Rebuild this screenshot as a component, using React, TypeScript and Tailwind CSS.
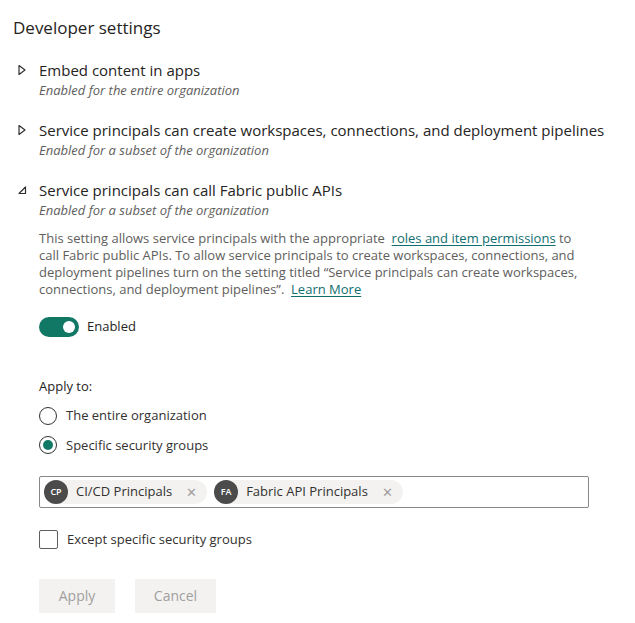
import React from 'react';

const font = { fontFamily: '"Open Sans", "Noto Sans", sans-serif' };

const CollapsedIcon = () => (
  <svg width="10" height="12" viewBox="0 0 10 12" className="shrink-0">
    <path d="M2 1.5 L8 6 L2 10.5 Z" fill="none" stroke="#323130" strokeWidth="1.2" strokeLinejoin="round" />
  </svg>
);

const ExpandedIcon = () => (
  <svg width="10" height="12" viewBox="0 0 10 12" className="shrink-0">
    <path d="M8.5 3 L8.5 9.5 L2 9.5 Z" fill="none" stroke="#323130" strokeWidth="1.2" strokeLinejoin="round" />
  </svg>
);

const SettingHeader = ({ title, sub, open }: any) => (
  <div className="flex">
    <div className="w-[39px] shrink-0 pl-[17px] pt-[4px]">{open ? <ExpandedIcon /> : <CollapsedIcon />}</div>
    <div>
      <div className="text-[15px] leading-[20px] text-[#252423]">{title}</div>
      <div className="text-[13px] leading-[20px] italic text-[#605e5c]">{sub}</div>
    </div>
  </div>
);

const Chip = ({ initials, label }: any) => (
  <div className="flex items-center h-[24px] rounded-full bg-[#f3f2f1] pr-[10px]">
    <div className="w-[24px] h-[24px] rounded-full bg-[#4b4b4b] text-white text-[9px] font-semibold flex items-center justify-center">
      {initials}
    </div>
    <span className="ml-[8px] text-[13px] text-[#323130]">{label}</span>
    <span className="ml-[14px] text-[#a19f9d] text-[13px] leading-none">✕</span>
  </div>
);

export default function App() {
  return (
    <div className="bg-white w-[635px] h-[623px] overflow-hidden text-[#323130]" style={font}>
      <div className="pl-[13px] pt-[15px] text-[17px] leading-[26px] text-[#252423]">Developer settings</div>

      <div className="mt-[19px] flex flex-col gap-[20px]">
        <SettingHeader title="Embed content in apps" sub="Enabled for the entire organization" />
        <SettingHeader
          title="Service principals can create workspaces, connections, and deployment pipelines"
          sub="Enabled for a subset of the organization"
        />
        <div>
          <SettingHeader title="Service principals can call Fabric public APIs" sub="Enabled for a subset of the organization" open />
          <div className="ml-[39px] w-[550px] mt-[10px] text-[13px] leading-[17px] text-[#605e5c]">
            This setting allows service principals with the appropriate&nbsp;{' '}
            <span className="text-[#0f6e70] underline underline-offset-2">roles and item permissions</span> to call
            Fabric public APIs. To allow service principals to create workspaces, connections, and deployment pipelines turn on
            the setting titled “Service principals can create workspaces, connections, and deployment pipelines”.&nbsp;{' '}
            <span className="text-[#0f6e70] underline underline-offset-2">Learn More</span>
          </div>

          <div className="pl-[39px] mt-[19px] flex items-center gap-[8px]">
            <div className="w-[40px] h-[20px] rounded-full bg-[#117865] flex items-center justify-end pr-[4px]">
              <div className="w-[12px] h-[12px] rounded-full bg-white" />
            </div>
            <span className="text-[13px] text-[#252423]">Enabled</span>
          </div>

          <div className="pl-[39px] mt-[40px] text-[13px] leading-[18px] text-[#252423]">Apply to:</div>

          <div className="pl-[39px] mt-[11px] flex flex-col gap-[10px]">
            <div className="flex items-center gap-[9px]">
              <div className="w-[18px] h-[18px] rounded-full border border-[#323130] bg-white" />
              <span className="text-[13px] text-[#323130]">The entire organization</span>
            </div>
            <div className="flex items-center gap-[9px]">
              <div className="w-[18px] h-[18px] rounded-full border border-[#323130] bg-white flex items-center justify-center">
                <div className="w-[10px] h-[10px] rounded-full bg-[#117865]" />
              </div>
              <span className="text-[13px] text-[#323130]">Specific security groups</span>
            </div>
          </div>

          <div className="ml-[39px] mt-[21px] w-[550px] h-[32px] border border-[#8a8886] rounded-[2px] flex items-center gap-[7px] pl-[4px]">
            <Chip initials="CP" label="CI/CD Principals" />
            <Chip initials="FA" label="Fabric API Principals" />
          </div>

          <div className="pl-[39px] mt-[22px] flex items-center gap-[9px]">
            <div className="w-[19px] h-[19px] border border-[#605e5c] rounded-[2px] bg-white" />
            <span className="text-[13px] text-[#323130]">Except specific security groups</span>
          </div>

          <div className="pl-[39px] mt-[29px] flex gap-[20px]">
            <button className="w-[76px] h-[34px] bg-[#f3f2f1] text-[#a19f9d] text-[14px]">Apply</button>
            <button className="w-[81px] h-[34px] bg-[#f3f2f1] text-[#a19f9d] text-[14px]">Cancel</button>
          </div>
        </div>
      </div>
    </div>
  );
}
